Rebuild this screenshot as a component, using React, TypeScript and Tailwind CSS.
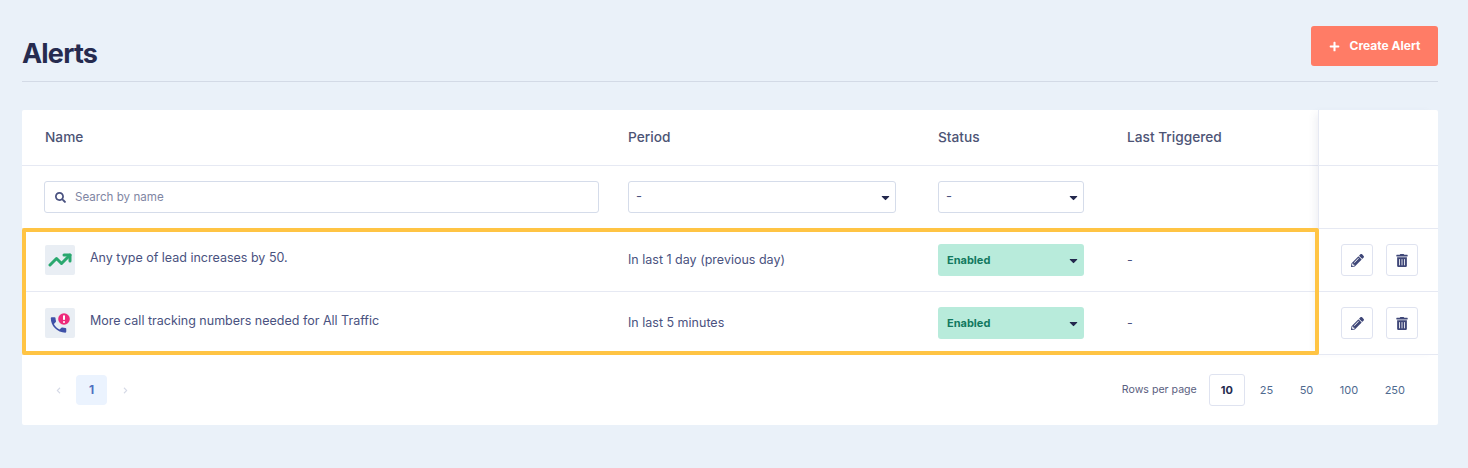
import { TrendingUp } from 'lucide-react';
import { FaSearch, FaPencilAlt, FaTrashAlt, FaCaretDown, FaPlus, FaChevronLeft, FaChevronRight } from 'react-icons/fa';

const gridCols = 'grid grid-cols-[583px_310px_189px_1fr] items-center';

const alerts = [
  { name: 'Any type of lead increases by 50.', period: 'In last 1 day (previous day)', kind: 'trend' },
  { name: 'More call tracking numbers needed for All Traffic', period: 'In last 5 minutes', kind: 'call' },
];

const rowSizes = ['25', '50', '100', '250'];

function CallIcon() {
  return (
    <svg viewBox="0 0 30 30" className="w-[30px] h-[30px]">
      <path
        transform="translate(3.2 6.6) scale(0.86)"
        fill="#3f51a8"
        d="M6.62 10.79c1.44 2.83 3.76 5.14 6.59 6.59l2.2-2.2c.27-.27.67-.36 1.02-.24 1.12.37 2.33.57 3.57.57.55 0 1 .45 1 1V20c0 .55-.45 1-1 1-9.39 0-17-7.61-17-17 0-.55.45-1 1-1h3.5c.55 0 1 .45 1 1 0 1.25.2 2.45.57 3.57.11.35.03.74-.25 1.02l-2.2 2.2z"
      />
      <circle cx="19" cy="11" r="5.8" fill="#ee2a7b" />
      <rect x="18" y="7.3" width="2" height="4.8" rx="0.8" fill="#fff" />
      <rect x="18" y="12.9" width="2" height="2" rx="1" fill="#fff" />
    </svg>
  );
}

function Select({ width, label }: { width: string; label: string }) {
  return (
    <div className={`${width} h-8 flex items-center justify-between pl-[7px] pr-[3px] bg-white border border-[#d5dcea] rounded-[3px] text-[13px] text-[#4a5280]`}>
      <span>{label}</span>
      <FaCaretDown className="w-[13px] h-[13px] text-[#23284d]" />
    </div>
  );
}

export default function App() {
  return (
    <div className="min-h-screen bg-[#eaf1f9] pl-[22px] pr-[30px] pt-[26px] font-['Inter',sans-serif]">
      <div className="flex items-center justify-between h-[56px] border-b border-[#d3dae6]">
        <h1 className="text-[27px] leading-none font-bold tracking-[-0.8px] text-[#262b4f]">Alerts</h1>
        <button className="self-start w-[127px] h-10 flex items-center justify-center gap-[10px] bg-[#ff7c66] rounded-[3px] text-white text-[12px] font-bold">
          <FaPlus className="w-[11px] h-[11px]" />
          Create Alert
        </button>
      </div>

      <div className="relative mt-7 bg-white rounded-[2px] w-[1416px] h-[315px]">
        <div className="flex">
          <div className="w-[1296px]">
            <div className={`${gridCols} h-[56px] border-b border-[#e6e9f3] text-[13.7px] font-medium text-[#4d5475]`}>
              <div className="pl-[23px]">Name</div>
              <div className="pl-[23px]">Period</div>
              <div className="pl-[23px]">Status</div>
              <div className="pl-[23px]">Last Triggered</div>
            </div>

            <div className={`${gridCols} h-[63px] border-b border-[#e6e9f3]`}>
              <div className="pl-[22px]">
                <div className="w-[555px] h-8 flex items-center gap-[9px] px-[10px] border border-[#d5dcea] rounded-[3px]">
                  <FaSearch className="w-[11px] h-[11px] text-[#4a5280]" />
                  <input
                    placeholder="Search by name"
                    className="flex-1 pt-px outline-none text-[11.6px] text-[#4a5280] placeholder:text-[#7f86a3]"
                  />
                </div>
              </div>
              <div className="pl-[23px]"><Select width="w-[268px]" label="-" /></div>
              <div className="pl-[23px]"><Select width="w-[146px]" label="-" /></div>
              <div />
            </div>

            {alerts.map((alert) => (
              <div key={alert.name} className={`${gridCols} h-[63px] border-b border-[#e6e9f3] text-[12.5px] text-[#4a5280]`}>
                <div className="flex items-center pl-[23px] gap-[15px]">
                  <div className="w-[30px] h-[30px] flex items-center justify-center rounded-[2px] bg-[#e9eef4]">
                    {alert.kind === 'trend' ? (
                      <TrendingUp className="w-[24px] h-[24px] text-[#2aa86f]" strokeWidth={3} />
                    ) : (
                      <CallIcon />
                    )}
                  </div>
                  <span className="-mt-1">{alert.name}</span>
                </div>
                <div className="pl-[23px]">{alert.period}</div>
                <div className="pl-[23px]">
                  <div className="w-[146px] h-8 flex items-center justify-between pl-[9px] pr-[4px] bg-[#b8ebdb] rounded-[3px]">
                    <span className="text-[11px] font-bold text-[#12795f]">Enabled</span>
                    <FaCaretDown className="w-[13px] h-[13px] text-[#23284d]" />
                  </div>
                </div>
                <div className="pl-[23px]">-</div>
              </div>
            ))}
          </div>

          <div className="w-[120px] border-l border-[#e6e9f3] shadow-[-6px_0_8px_-4px_rgba(80,90,140,0.10)]">
            <div className="h-[56px] border-b border-[#e6e9f3]" />
            <div className="h-[63px] border-b border-[#e6e9f3]" />
            {alerts.map((alert) => (
              <div key={alert.name} className="h-[63px] flex items-center gap-[13px] pl-[22px] border-b border-[#e6e9f3]">
                <button className="w-8 h-8 flex items-center justify-center border border-[#dfe3f0] rounded-[3px] text-[#3f4778]">
                  <FaPencilAlt className="w-[13px] h-[13px]" />
                </button>
                <button className="w-8 h-8 flex items-center justify-center border border-[#dfe3f0] rounded-[3px] text-[#3f4778]">
                  <FaTrashAlt className="w-[12px] h-[13px]" />
                </button>
              </div>
            ))}
          </div>
        </div>

        <div className="flex items-center justify-between h-[70px] pl-[33px] pr-[33px]">
          <div className="flex items-center text-[#d5d9e6]">
            <FaChevronLeft className="w-[7px] h-[7px]" />
            <div className="w-[31px] h-[30px] ml-[14px] mr-[15px] flex items-center justify-center rounded-[4px] bg-[#ebf3fe] text-[12px] font-bold text-[#4f6fc0]">1</div>
            <FaChevronRight className="w-[7px] h-[7px]" />
          </div>

          <div className="flex items-center">
            <span className="mr-3 text-[10.6px] text-[#5a6080]">Rows per page</span>
            <div className="w-9 h-8 mr-[15px] flex items-center justify-center border border-[#dfe3f0] rounded-[3px] text-[11px] font-bold text-[#262b4f]">10</div>
            <div className="flex items-center gap-[26.5px] text-[11px] text-[#4f6a8f]">
              {rowSizes.map((size) => (
                <span key={size}>{size}</span>
              ))}
            </div>
          </div>
        </div>

        <div className="absolute left-0 top-[118px] w-[1297px] h-[127px] border-4 border-[#ffc444] rounded-[2px] pointer-events-none" />
      </div>
    </div>
  );
}
